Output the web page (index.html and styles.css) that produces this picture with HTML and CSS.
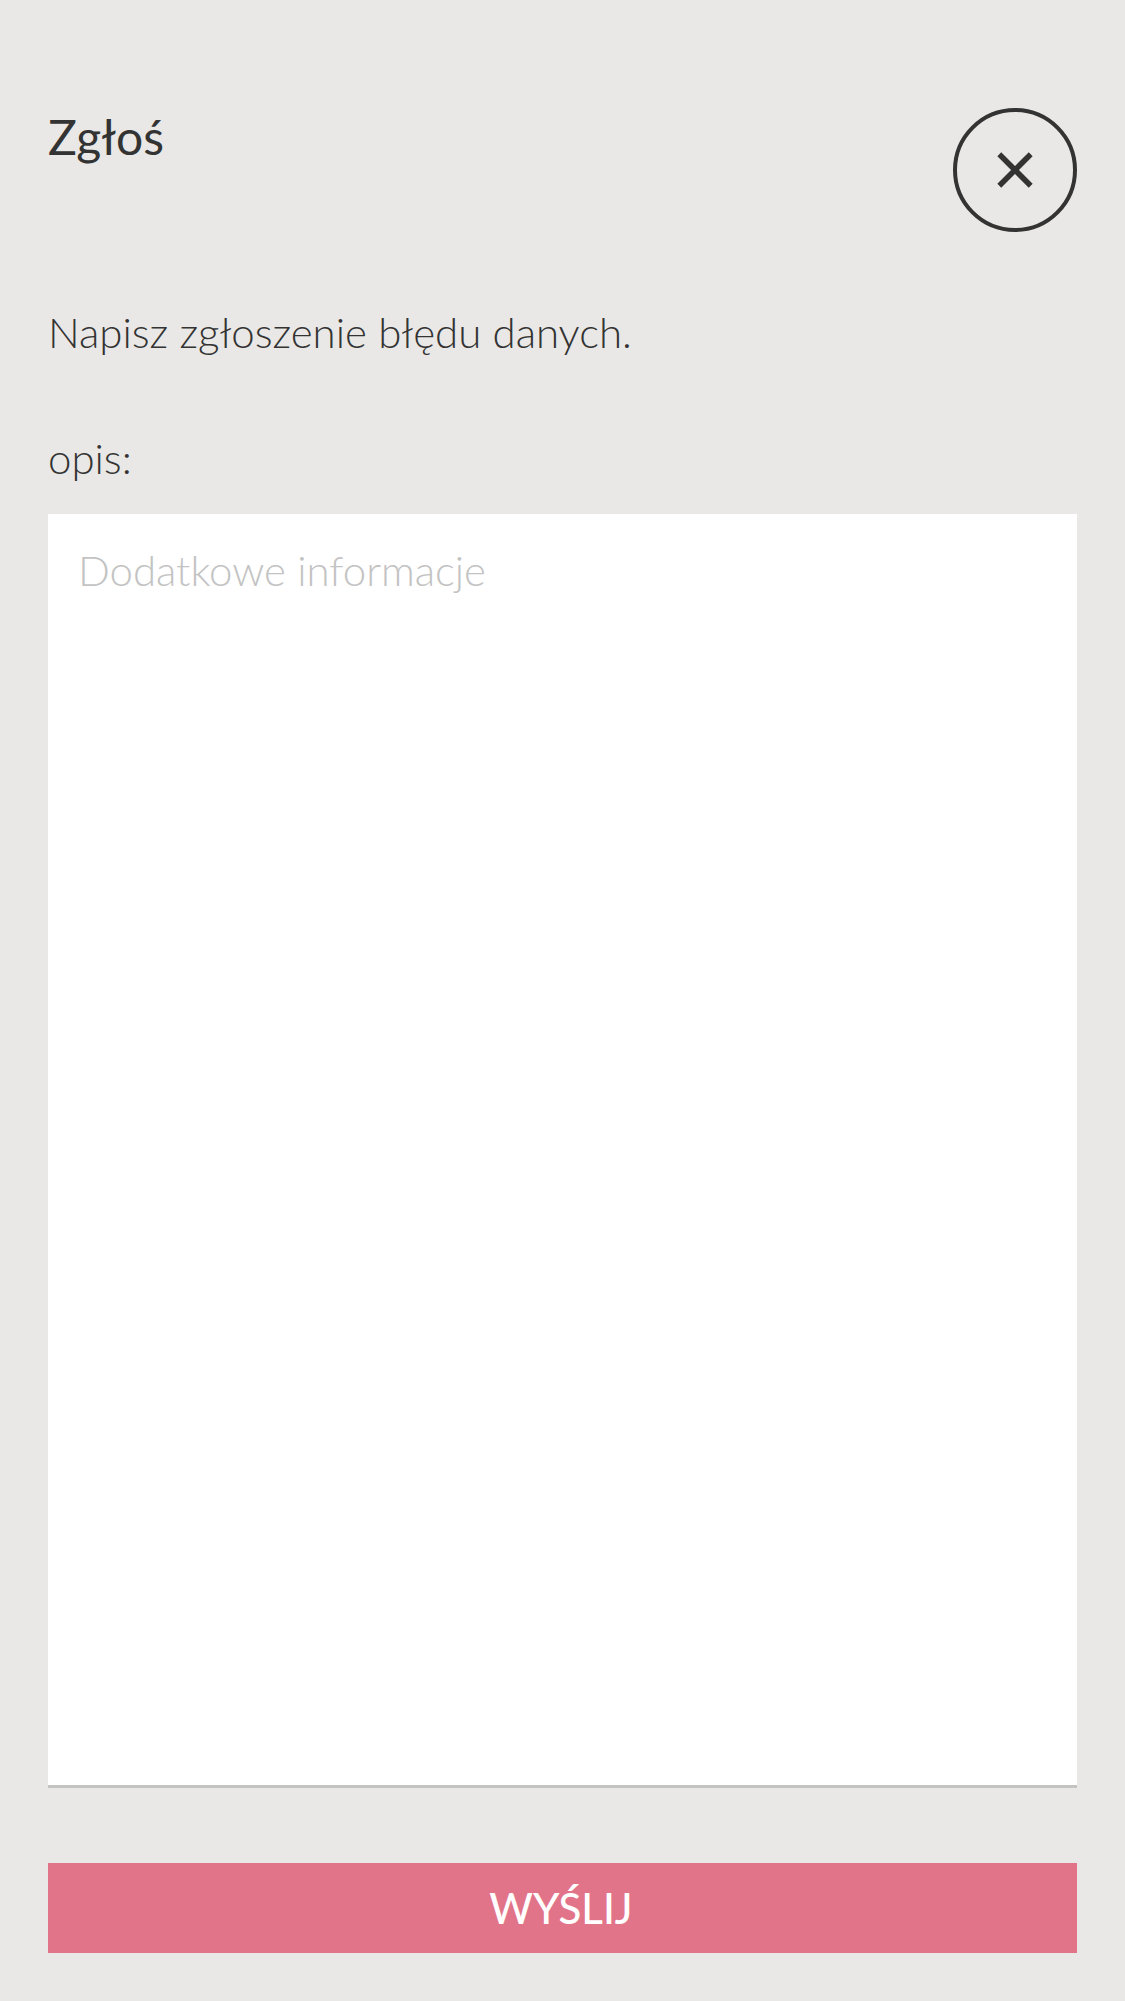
FILE: index.html
```html
<!DOCTYPE html>
<html lang="pl">
<head>
<meta charset="utf-8">
<title>Zgłoś</title>
<link rel="stylesheet" href="styles.css">
</head>
<body>
<main class="report">
  <header class="header">
    <h1 class="title">Zgłoś</h1>
    <button class="close" type="button" aria-label="Zamknij">
      <svg viewBox="0 0 124 124" width="124" height="124" fill="none" stroke="currentColor">
        <circle cx="62" cy="62" r="60" stroke-width="4"/>
        <path d="M46.300 46.300 77.700 77.700M77.700 46.300 46.300 77.700" stroke-width="5.500"/>
      </svg>
    </button>
  </header>
  <p class="intro">Napisz zgłoszenie błędu danych.</p>
  <label class="label" for="description">opis:</label>
  <textarea class="field" id="description" placeholder="Dodatkowe informacje"></textarea>
  <button class="submit" type="button">WYŚLIJ</button>
</main>
</body>
</html>
```

FILE: styles.css
```css
* { box-sizing: border-box; }
body {
  margin: 0;
  background: #e9e8e6;
  color: #333;
  font-family: Lato, sans-serif;
}
.report {
  display: flex;
  flex-direction: column;
  height: 2001px;
  padding: 108px 48px 48px;
}
.header {
  display: flex;
  justify-content: space-between;
  align-items: flex-start;
  height: 124px;
}
.title {
  margin: 0;
  font-size: 48px;
  font-weight: 400;
  line-height: 58px;
}
.close {
  width: 124px;
  height: 124px;
  padding: 0;
  border: 0;
  background: none;
  color: #333;
}
.close svg { display: block; }
.intro, .label {
  font-size: 42px;
  font-weight: 300;
  line-height: 54px;
  letter-spacing: -0.03px;
}
.intro { margin: 73px 0 0; }
.label { margin-top: 72px; }
.field {
  flex: 1;
  margin: 29px 0 75px;
  padding: 29px 30px;
  border: 0;
  border-bottom: 3px solid #c3c3c0;
  border-radius: 0;
  background: #fff;
  color: inherit;
  font: 300 42px/54px Lato, sans-serif;
  letter-spacing: -0.04px;
  resize: none;
}
.field::placeholder { color: #c3c3c3; }
.submit {
  height: 90px;
  padding: 0 3px 0 0;
  border: 0;
  background: #e2748a;
  color: #fff;
  font: 500 42px/90px Lato, sans-serif;
}
```
